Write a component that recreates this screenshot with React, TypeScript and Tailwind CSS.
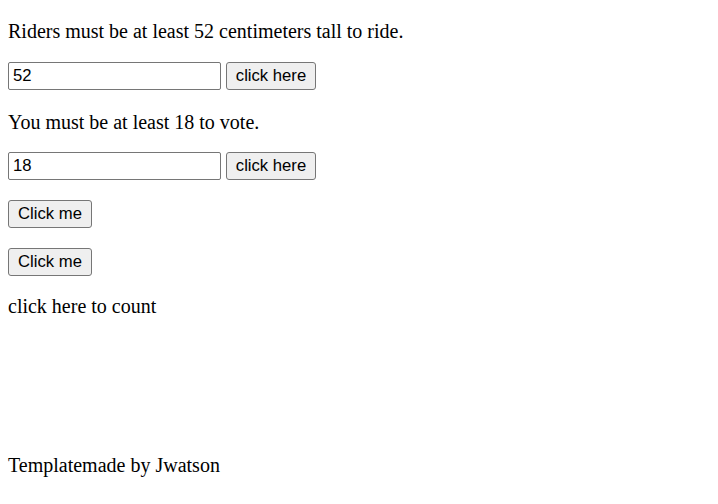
export default function App() {
  const serif = { fontFamily: '"Liberation Serif", "Times New Roman", serif' };
  const inputCls =
    "w-[213px] h-[28px] border border-[#767676] rounded-[2px] px-[4px] text-[16.67px] leading-[20px] text-black bg-white outline-none";
  const btnCls =
    "h-[28px] border border-[#767676] rounded-[3px] bg-[#efefef] text-[16.67px] leading-[20px] text-black flex items-center justify-center";
  const arial = { fontFamily: '"Liberation Sans", Arial, sans-serif' };
  return (
    <div className="min-h-[504px] bg-white text-black px-[8px] pt-[20px]" style={serif}>
      <p className="text-[20px] leading-[23px]">Riders must be at least 52 centimeters tall to ride.</p>
      <div className="mt-[19px] flex items-center gap-[5px]">
        <input className={inputCls} style={arial} defaultValue="52" />
        <button className={btnCls + " w-[90px]"} style={arial}>click here</button>
      </div>
      <p className="mt-[21px] text-[20px] leading-[23px]">You must be at least 18 to vote.</p>
      <div className="mt-[18px] flex items-center gap-[5px]">
        <input className={inputCls} style={arial} defaultValue="18" />
        <button className={btnCls + " w-[90px]"} style={arial}>click here</button>
      </div>
      <div className="mt-[20px]">
        <button className={btnCls + " w-[84px]"} style={arial}>Click me</button>
      </div>
      <div className="mt-[20px]">
        <button className={btnCls + " w-[84px]"} style={arial}>Click me</button>
      </div>
      <p className="mt-[19px] text-[20px] leading-[23px]">click here to count</p>
      <p className="mt-[136px] text-[20px] leading-[23px]">Templatemade by Jwatson</p>
    </div>
  );
}
